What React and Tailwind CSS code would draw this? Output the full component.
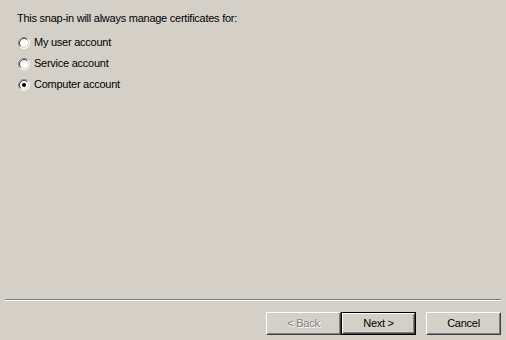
import React from "react";

function Radio({ checked }) {
  return (
    <svg width="12" height="12" viewBox="0 0 12 12" className="shrink-0">
      <circle cx="6" cy="6" r="5.5" fill="#ffffff" stroke="#ffffff" strokeWidth="1" />
      <path d="M2.1 9.9 A5.5 5.5 0 0 1 9.9 2.1" stroke="#808080" strokeWidth="1" fill="none" />
      <path d="M2.8 9.2 A4.5 4.5 0 0 1 9.2 2.8" stroke="#404040" strokeWidth="1" fill="none" />
      <path d="M9.2 2.8 A4.5 4.5 0 0 1 2.8 9.2" stroke="#d4d0c8" strokeWidth="1" fill="none" />
      {checked && <circle cx="6" cy="6" r="2" fill="#000000" />}
    </svg>
  );
}

function Btn({ children, def, disabled }) {
  const inner = (
    <div className="h-full w-full border border-t-white border-l-white border-r-[#404040] border-b-[#404040]">
      <div className="h-full w-full flex items-center justify-center border border-t-[#d4d0c8] border-l-[#d4d0c8] border-r-[#808080] border-b-[#808080]">
        <span
          className={disabled ? "text-[#808080] [text-shadow:1px_1px_0_#ffffff]" : "text-black"}
        >
          {children}
        </span>
      </div>
    </div>
  );
  return (
    <div className={"w-[75px] h-[23px] " + (def ? "border border-black" : "")}>
      {inner}
    </div>
  );
}

export default function App() {
  const rows = [
    { label: "My user account", checked: false },
    { label: "Service account", checked: false },
    { label: "Computer account", checked: true },
  ];
  return (
    <div
      className="w-[506px] h-[340px] bg-[#d4d0c8] flex flex-col text-[11px] leading-[13px] text-black tracking-[-0.25px]"
      style={{ fontFamily: '"Liberation Sans", Arial, sans-serif' }}
    >
      <div className="flex-1 pl-[17px] pt-[12px]">
        <div>This snap-in will always manage certificates for:</div>
        <div className="flex flex-col gap-[8px] mt-[11px] pl-[1px]">
          {rows.map((r) => (
            <div key={r.label} className="flex items-center gap-[4px]">
              <Radio checked={r.checked} />
              <span>{r.label}</span>
            </div>
          ))}
        </div>
      </div>
      <div className="mx-[5px] h-[2px] border-t border-t-[#808080] border-b border-b-white" />
      <div className="flex justify-end items-center pt-[11px] pb-[5px] pr-[5px]">
        <Btn disabled>&lt; Back</Btn>
        <Btn def>Next &gt;</Btn>
        <div className="w-[10px]" />
        <Btn>Cancel</Btn>
      </div>
    </div>
  );
}
